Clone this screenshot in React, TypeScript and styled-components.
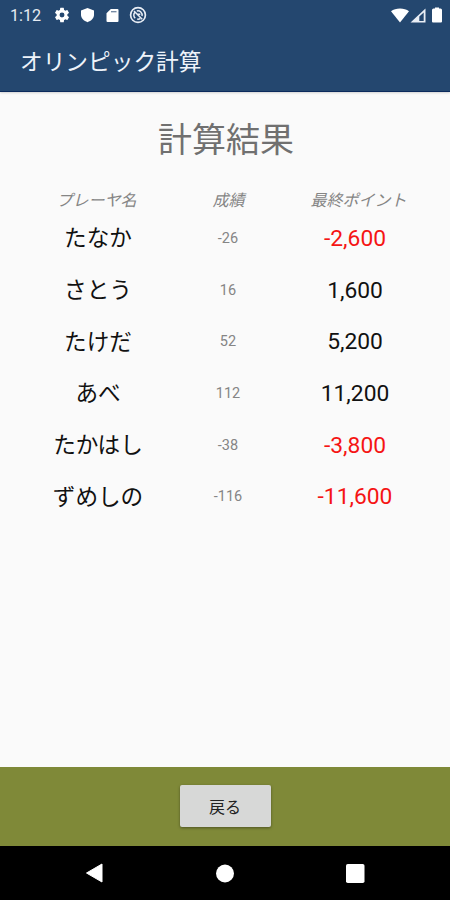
import React from 'react';
import styled, { createGlobalStyle } from 'styled-components';

const GlobalStyle = createGlobalStyle`
  body {
    margin: 0;
    background: #fafafa;
  }
  * {
    box-sizing: border-box;
  }
`;

const Screen = styled.div`
  display: flex;
  flex-direction: column;
  width: 450px;
  height: 900px;
  background: #fafafa;
  font-family: Roboto, 'Noto Sans CJK JP', sans-serif;
  overflow: hidden;
`;

const Header = styled.header`
  height: 92px;
  flex: none;
  background: #24476f;
  border-bottom: 1px solid #0b2a5c;
  box-shadow: 0 1px 2px rgba(0, 0, 0, 0.16);
  color: #fff;
`;

const StatusBar = styled.div`
  display: flex;
  align-items: center;
  justify-content: space-between;
  height: 30px;
  padding: 0 8px 0 10px;
`;

const Clock = styled.span`
  width: 43px;
  padding-top: 1px;
  font-size: 16.2px;
  line-height: 29px;
  color: #e6ebf2;
`;

const StatusGroup = styled.div`
  display: flex;
  align-items: center;
`;

const StatusIcon = styled.svg<{ $gap?: number }>`
  display: block;
  flex: none;
  margin-left: ${({ $gap = 0 }) => $gap}px;
`;

const AppTitle = styled.h1`
  margin: 0;
  padding: 3px 0 0 20px;
  font-size: 22.7px;
  font-weight: 400;
  line-height: 60px;
  color: #eef3fa;
`;

const Content = styled.main`
  flex: 1;
  padding: 23px 20px 0;
`;

const ResultTitle = styled.h2`
  margin: 0 0 24px;
  padding-left: 2px;
  font-size: 34px;
  font-weight: 400;
  line-height: 50px;
  text-align: center;
  color: #707070;
`;

const Row = styled.div`
  display: grid;
  grid-template-columns: 156px 104px 150px;
  align-items: center;
  justify-items: center;
  height: 51.7px;
`;

const HeadRow = styled(Row)`
  grid-template-columns: 153px 111px 149px;
  height: 24px;
  font-size: 16px;
  font-style: italic;
  line-height: 24px;
  color: #858585;
`;

const PlayerName = styled.span`
  padding-top: 1px;
  font-size: 22.6px;
  line-height: 32px;
  color: #111;
`;

const Score = styled.span`
  font-size: 14.5px;
  line-height: 20px;
  color: #858585;
`;

const Points = styled.span<{ $negative: boolean }>`
  font-size: 22.8px;
  line-height: 30px;
  color: ${({ $negative }) => ($negative ? '#f51414' : '#111')};
`;

const Rows = styled.div``;

const ActionBar = styled.footer`
  display: flex;
  align-items: center;
  justify-content: center;
  flex: none;
  height: 79px;
  padding-bottom: 1px;
  background: #7f8938;
`;

const BackButton = styled.button`
  width: 91px;
  height: 42px;
  padding: 0;
  border: 0;
  border-radius: 2px;
  background: #d7d8d7;
  box-shadow: 0 1px 3px rgba(0, 0, 0, 0.38);
  font-family: Roboto, 'Noto Sans CJK JP', sans-serif;
  font-size: 16px;
  font-weight: 400;
  color: #222;
`;

const NavBar = styled.nav`
  display: flex;
  align-items: center;
  justify-content: space-between;
  flex: none;
  height: 54px;
  padding: 0 85px;
  background: #000;
`;

const players = [
  { name: 'たなか', score: -26 },
  { name: 'さとう', score: 16 },
  { name: 'たけだ', score: 52 },
  { name: 'あべ', score: 112 },
  { name: 'たかはし', score: -38 },
  { name: 'ずめしの', score: -116 },
];

const GearIcon = () => (
  <StatusIcon width="18" height="18" viewBox="0 0 24 24" fill="#fff">
    <path d="M19.14 12.94c.04-.3.06-.61.06-.94s-.02-.64-.07-.94l2.03-1.58a.49.49 0 0 0 .12-.61l-1.92-3.32a.49.49 0 0 0-.59-.22l-2.39.96a7 7 0 0 0-1.62-.94l-.36-2.54A.48.48 0 0 0 13.92 2.4h-3.84a.48.48 0 0 0-.47.41l-.36 2.54c-.59.24-1.13.57-1.62.94l-2.39-.96a.48.48 0 0 0-.59.22L2.74 8.87a.48.48 0 0 0 .12.61l2.03 1.58a6 6 0 0 0 0 1.88l-2.03 1.58a.49.49 0 0 0-.12.61l1.92 3.32c.12.22.37.29.59.22l2.39-.96c.5.38 1.03.7 1.62.94l.36 2.54c.05.24.24.41.48.41h3.84c.24 0 .44-.17.47-.41l.36-2.54a7 7 0 0 0 1.62-.94l2.39.96c.22.08.47 0 .59-.22l1.92-3.32a.48.48 0 0 0-.12-.61zM12 15.3a3.3 3.3 0 1 1 0-6.6 3.3 3.3 0 0 1 0 6.6z" />
  </StatusIcon>
);

const ShieldIcon = () => (
  <StatusIcon $gap={9} width="15" height="16" viewBox="0 0 15 16" fill="#fff">
    <path d="M7.5 1 14 3.4v4.4c0 3.4-2.8 6.1-6.5 7.4C3.800 13.900 1 11.200 1 7.800V3.400z" />
  </StatusIcon>
);

const SdCardIcon = () => (
  <StatusIcon $gap={11} width="13" height="15" viewBox="0 0 13 15">
    <path d="M4.800 1H11.500a1 1 0 0 1 1 1v11a1 1 0 0 1-1 1H1.500a1 1 0 0 1-1-1V5.300z" fill="#fff" />
    <path d="M5 3.700h5.500" stroke="#24476f" strokeWidth="1.300" opacity=".65" />
  </StatusIcon>
);

const SyncOffIcon = () => (
  <StatusIcon $gap={10} width="18" height="18" viewBox="0 0 18 18" fill="none" stroke="#e9eef5">
    <circle cx="9" cy="9" r="7.400" strokeWidth="1.700" />
    <path d="M6.200 12.200A4.200 4.200 0 0 1 6 6.100M7.800 5a4.200 4.200 0 0 1 5.200 5M11.400 12.500a4.200 4.200 0 0 1-3.200.600" strokeWidth="1.500" />
    <path d="M5 5 13.200 13.200M8.300 8.300h3" strokeWidth="1.500" />
  </StatusIcon>
);

const WifiIcon = () => (
  <StatusIcon width="18" height="15" viewBox="0 0 18 15" fill="#fff">
    <path d="M0 3.300C2.400 1.400 5.500.5 9 .5s6.600.9 9 2.800L9 14.600z" />
  </StatusIcon>
);

const SignalIcon = () => (
  <StatusIcon $gap={1} width="16" height="15" viewBox="0 0 16 15">
    <path d="M.5 14.500 15.500.5v14z" fill="#e9eef5" />
    <path d="M9.300 8.600 13.700 4.400v8.600H9.300z" fill="#24476f" />
  </StatusIcon>
);

const BatteryIcon = () => (
  <StatusIcon $gap={6} width="10" height="16" viewBox="0 0 10 16" fill="#fff">
    <path d="M3 .5h4v1h1.500A1.500 1.500 0 0 1 10 3v11.500a1 1 0 0 1-1 1H1a1 1 0 0 1-1-1V3A1.500 1.500 0 0 1 1.500 1.500H3z" />
  </StatusIcon>
);

export default function App() {
  return (
    <Screen>
      <GlobalStyle />
      <Header>
        <StatusBar>
          <StatusGroup>
            <Clock>1:12</Clock>
            <GearIcon />
            <ShieldIcon />
            <SdCardIcon />
            <SyncOffIcon />
          </StatusGroup>
          <StatusGroup>
            <WifiIcon />
            <SignalIcon />
            <BatteryIcon />
          </StatusGroup>
        </StatusBar>
        <AppTitle>オリンピック計算</AppTitle>
      </Header>
      <Content>
        <ResultTitle>計算結果</ResultTitle>
        <HeadRow>
          <span>プレーヤ名</span>
          <span>成績</span>
          <span>最終ポイント</span>
        </HeadRow>
        <Rows>
          {players.map(({ name, score }) => (
            <Row key={name}>
              <PlayerName>{name}</PlayerName>
              <Score>{score}</Score>
              <Points $negative={score < 0}>{(score * 100).toLocaleString('en-US')}</Points>
            </Row>
          ))}
        </Rows>
      </Content>
      <ActionBar>
        <BackButton>戻る</BackButton>
      </ActionBar>
      <NavBar>
        <svg width="18" height="20" viewBox="0 0 18 20">
          <path d="M1.500 10 17 1v18z" fill="#fff" stroke="#fff" strokeLinejoin="round" />
        </svg>
        <svg width="19" height="19" viewBox="0 0 19 19">
          <circle cx="10" cy="9.500" r="9" fill="#fff" />
        </svg>
        <svg width="19" height="19" viewBox="0 0 19 19">
          <rect width="18.500" height="19" rx="1.800" fill="#fff" />
        </svg>
      </NavBar>
    </Screen>
  );
}
